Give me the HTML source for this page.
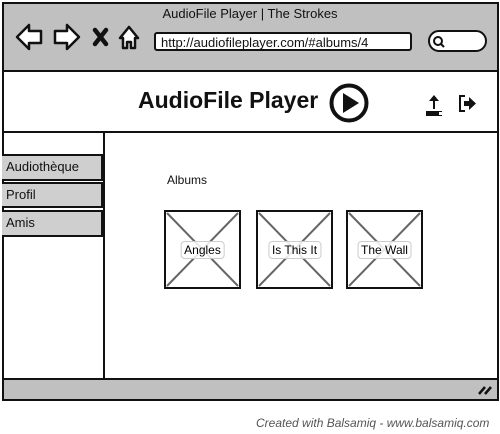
<!DOCTYPE html>
<html><head><meta charset="utf-8"><style>
body{margin:0;width:500px;height:434px;background:#fff;position:relative;overflow:hidden;font-family:"Liberation Sans",sans-serif;}
.a{position:absolute;box-sizing:border-box;}
.nav{background:#cfcfcf;border:2px solid #111;border-left:none;font-size:13px;padding:3px 0 0 4px;color:#111;}
.lbl{position:absolute;left:50%;top:50%;transform:translate(-50%,-50%);font-size:12px;background:rgba(255,255,255,.85);border:1px solid #ccc;border-radius:4px;padding:1px 3px;white-space:nowrap;}
</style></head><body>
<div class="a" style="left:2px;top:2px;width:497px;height:399px;border:2px solid #111;"></div>
<div class="a" style="left:4px;top:4px;width:493px;height:68px;background:#c0c0c0;border-bottom:2px solid #111;"></div>
<div class="a" style="left:0;top:6px;width:500px;text-align:center;font-size:13px;color:#111;">AudioFile Player | The Strokes</div>
<svg class="a" style="left:0;top:0" width="160" height="70" viewBox="0 0 160 70">
<g stroke="#111" stroke-width="2.5" fill="#fff" stroke-linejoin="round">
<path d="M17 37 L29 25 L29 31 L41 31 L41 43 L29 43 L29 49 Z"/>
<path d="M79 37 L67 25 L67 31 L55 31 L55 43 L67 43 L67 49 Z"/>
<path d="M120 38 L129 27 L138 38 L135 38 L135 48 L131 48 L131 42 L127 42 L127 48 L123 48 L123 38 Z"/>
</g>
<path d="M95 30 L106 44 M106 30 L95 44" stroke="#111" stroke-width="4.5" stroke-linecap="round"/>
</svg>
<div class="a" style="left:154px;top:32px;width:258px;height:19px;background:#fff;border:2px solid #111;border-radius:3px;font-size:13px;padding:1px 5px;color:#111;">http://audiofileplayer.com/#albums/4</div>
<div class="a" style="left:428px;top:30px;width:59px;height:22px;background:#fff;border:2px solid #111;border-radius:11px;"></div>
<svg class="a" style="left:432px;top:35px" width="14" height="14"><circle cx="6" cy="6" r="4" stroke="#111" stroke-width="2" fill="none"/><path d="M9 9 L12 12" stroke="#111" stroke-width="2"/></svg>
<div class="a" style="left:138px;top:87px;font-size:23px;font-weight:bold;color:#111;">AudioFile Player</div>
<svg class="a" style="left:328px;top:82px" width="42" height="42"><circle cx="21" cy="21" r="17.5" stroke="#111" stroke-width="4" fill="#fff"/><path d="M15 11 L31 21 L15 31 Z" fill="#111"/></svg>
<svg class="a" style="left:422px;top:92px" width="60" height="26">
<path d="M4 19 H20 V24 H4 Z" fill="#111"/><path d="M11 17 V9 H7 L12 3 L17 9 H13 V17 Z" fill="#111"/><rect x="17" y="20" width="4" height="3" fill="#fff"/>
<path d="M43 4 H38 V19 H43" stroke="#111" stroke-width="2" fill="none"/><path d="M42 9 H47 V5 L54 11.5 L47 18 V14 H42 Z" fill="#111"/>
</svg>
<div class="a" style="left:2px;top:131px;width:497px;height:2px;background:#111;"></div>
<div class="a" style="left:103px;top:133px;width:2px;height:247px;background:#111;"></div>
<div class="a nav" style="left:2px;top:154px;width:101px;height:27px;">Audiothèque</div>
<div class="a nav" style="left:2px;top:182px;width:101px;height:26px;">Profil</div>
<div class="a nav" style="left:2px;top:210px;width:101px;height:27px;">Amis</div>
<div class="a" style="left:167px;top:173px;font-size:12px;color:#111;">Albums</div>
<svg class="a" style="left:0;top:0" width="500" height="434">
<g stroke="#666" stroke-width="2">
<path d="M167 213 L238 286 M238 213 L167 286"/>
<path d="M259 213 L330 286 M330 213 L259 286"/>
<path d="M349 213 L420 286 M420 213 L349 286"/>
</g>
<g stroke="#111" stroke-width="2" fill="none">
<rect x="165" y="211" width="75" height="77"/>
<rect x="257" y="211" width="75" height="77"/>
<rect x="347" y="211" width="75" height="77"/>
</g>
</svg>
<div class="a" style="left:165px;top:211px;width:75px;height:77px;"><span class="lbl">Angles</span></div>
<div class="a" style="left:257px;top:211px;width:75px;height:77px;"><span class="lbl">Is This It</span></div>
<div class="a" style="left:347px;top:211px;width:75px;height:77px;"><span class="lbl">The Wall</span></div>
<div class="a" style="left:2px;top:378px;width:497px;height:23px;background:#c0c0c0;border:2px solid #111;"></div>
<svg class="a" style="left:476px;top:383px" width="18" height="14"><path d="M3 11 L9 4 M9 11 L15 4" stroke="#111" stroke-width="2.5"/></svg>
<div class="a" style="left:256px;top:416px;font-size:12px;font-style:italic;color:#555;">Created with Balsamiq - www.balsamiq.com</div>
</body></html>
